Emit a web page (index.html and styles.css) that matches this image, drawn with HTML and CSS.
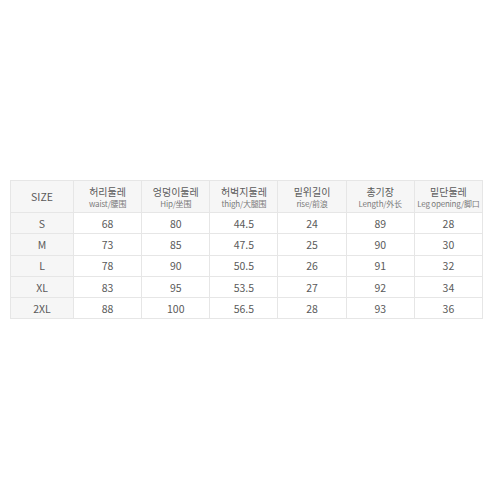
FILE: index.html
```html
<!DOCTYPE html>
<html>
<head>
<meta charset="utf-8">
<link rel="stylesheet" href="styles.css">
</head>
<body>
<div class="page">
<table class="size-table">
  <colgroup>
    <col class="c-size"><col><col><col><col><col><col>
  </colgroup>
  <thead>
    <tr>
      <th class="lead">SIZE</th>
      <th><span class="ko">허리둘레</span><span class="sub">waist/腰围</span></th>
      <th><span class="ko">엉덩이둘레</span><span class="sub">Hip/坐围</span></th>
      <th><span class="ko">허벅지둘레</span><span class="sub">thigh/大腿围</span></th>
      <th><span class="ko">밑위길이</span><span class="sub">rise/前浪</span></th>
      <th><span class="ko">총기장</span><span class="sub">Length/外长</span></th>
      <th><span class="ko">밑단둘레</span><span class="sub">Leg opening/脚口</span></th>
    </tr>
  </thead>
  <tbody>
    <tr><td class="lead">S</td><td>68</td><td>80</td><td>44.5</td><td>24</td><td>89</td><td>28</td></tr>
    <tr><td class="lead">M</td><td>73</td><td>85</td><td>47.5</td><td>25</td><td>90</td><td>30</td></tr>
    <tr><td class="lead">L</td><td>78</td><td>90</td><td>50.5</td><td>26</td><td>91</td><td>32</td></tr>
    <tr><td class="lead">XL</td><td>83</td><td>95</td><td>53.5</td><td>27</td><td>92</td><td>34</td></tr>
    <tr><td class="lead">2XL</td><td>88</td><td>100</td><td>56.5</td><td>28</td><td>93</td><td>36</td></tr>
  </tbody>
</table>
</div>
</body>
</html>
```
FILE: styles.css
```css
html, body {
  margin: 0;
  padding: 0;
  background: #ffffff;
}
.page {
  width: 492px;
  height: 492px;
  padding: 180px 0 0 10px;
  box-sizing: border-box;
}
.size-table {
  width: 473px;
  border-collapse: collapse;
  table-layout: fixed;
  font-family: "Noto Sans CJK KR", "Noto Sans", sans-serif;
  color: #5a5a5a;
  font-size: 10.5px;
}
.c-size { width: 63px; }
.size-table th, .size-table td {
  border: 1px solid #e6e6e6;
  text-align: center;
  padding: 0;
  font-weight: normal;
  white-space: nowrap;
}
.size-table thead th {
  background: #f6f6f6;
  height: 31px;
}
.size-table td {
  height: 20.3px;
}
.size-table .lead {
  background: #f6f6f6;
}
.ko {
  display: block;
  font-size: 10px;
  line-height: 13px;
  color: #5a5a5a;
}
.sub {
  display: block;
  font-size: 8px;
  line-height: 11px;
  color: #7a7a7a;
  letter-spacing: -0.2px;
}
```
